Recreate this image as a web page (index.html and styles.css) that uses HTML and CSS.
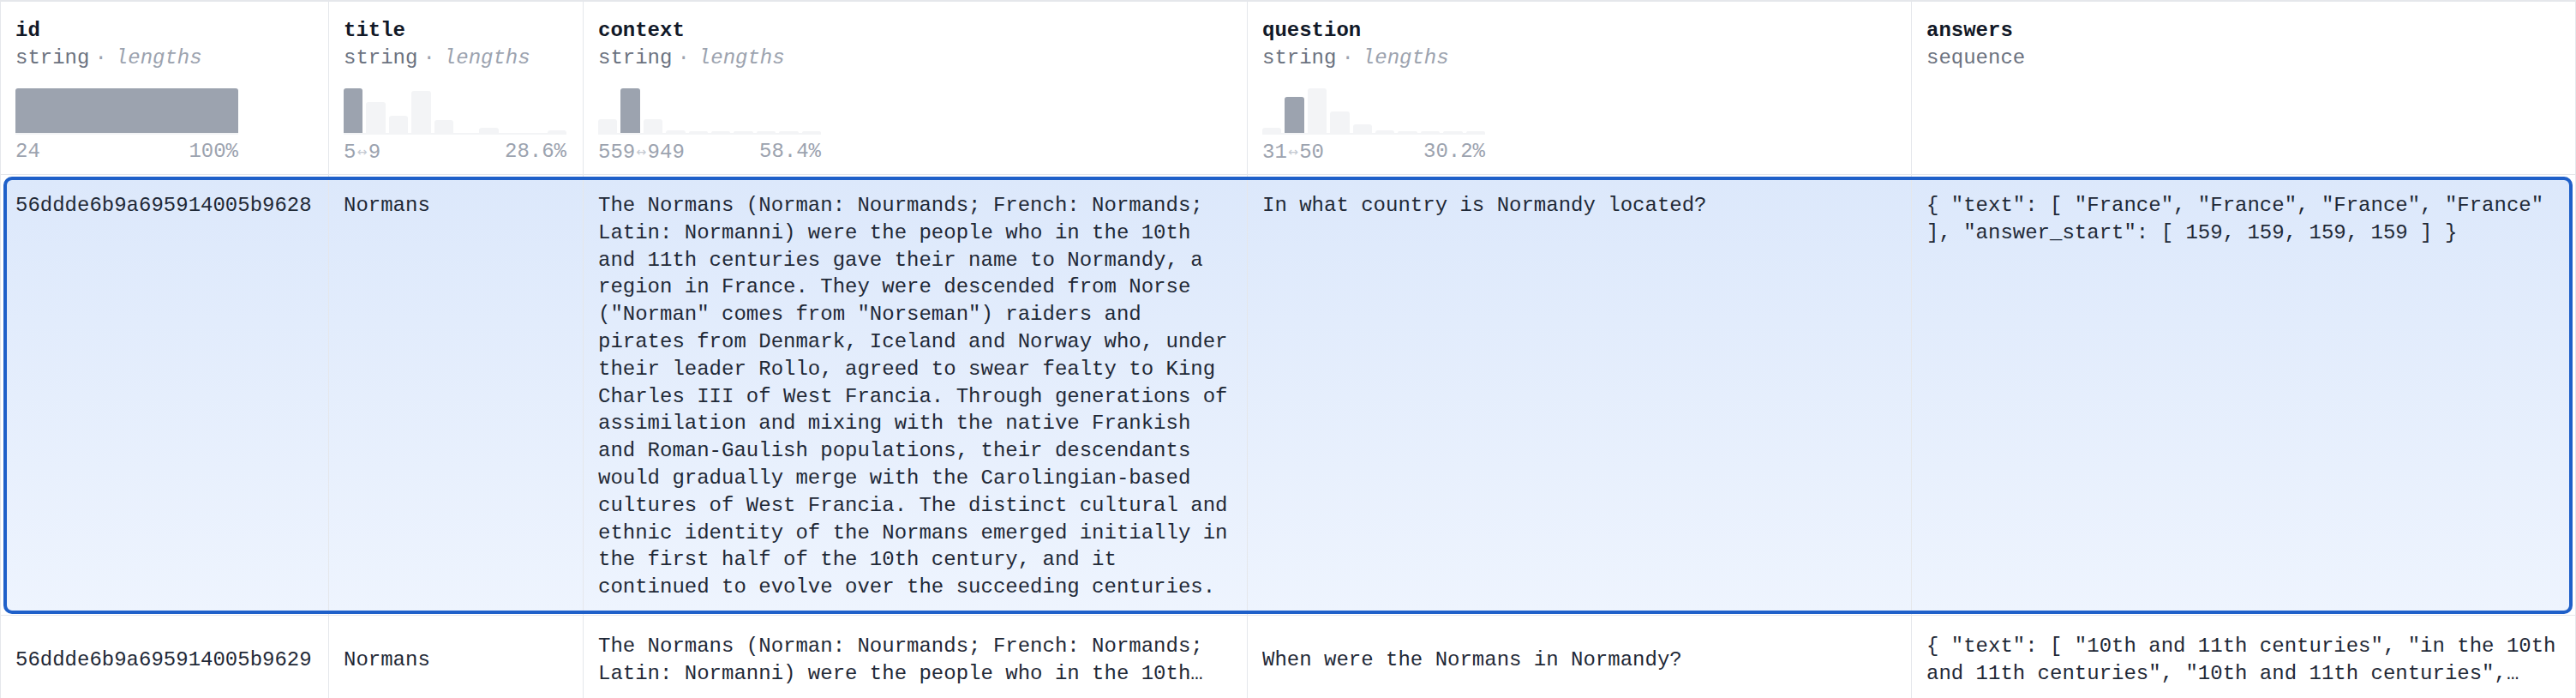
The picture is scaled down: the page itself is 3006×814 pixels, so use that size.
FILE: index.html
```html
<!DOCTYPE html>
<html lang="en">
<head>
<meta charset="utf-8">
<title>Dataset viewer</title>
<link rel="stylesheet" href="styles.css">
</head>
<body>
<div class="viewer">
  <div class="row head">
    <div class="cell">
      <div class="name">id</div>
      <div class="type">string<span class="sep">·</span><span class="kind">lengths</span></div>
      <div class="hist">
        <div class="bars"><div class="bar on" style="height:52px"></div></div>
        <div class="axis"></div>
        <div class="labels"><span>24</span><span>100%</span></div>
      </div>
    </div>
    <div class="cell">
      <div class="name">title</div>
      <div class="type">string<span class="sep">·</span><span class="kind">lengths</span></div>
      <div class="hist">
        <div class="bars">
          <div class="bar on" style="height:52px"></div>
          <div class="bar" style="height:36px"></div>
          <div class="bar" style="height:20px"></div>
          <div class="bar" style="height:49px"></div>
          <div class="bar" style="height:15px"></div>
          <div class="bar" style="height:0px"></div>
          <div class="bar" style="height:6px"></div>
          <div class="bar" style="height:0px"></div>
          <div class="bar" style="height:0px"></div>
          <div class="bar" style="height:3px"></div>
        </div>
        <div class="axis"></div>
        <div class="labels"><span>5<span class="arr">↔</span>9</span><span>28.6%</span></div>
      </div>
    </div>
    <div class="cell">
      <div class="name">context</div>
      <div class="type">string<span class="sep">·</span><span class="kind">lengths</span></div>
      <div class="hist">
        <div class="bars">
          <div class="bar" style="height:16px"></div>
          <div class="bar on" style="height:52px"></div>
          <div class="bar" style="height:16px"></div>
          <div class="bar" style="height:3px"></div>
          <div class="bar" style="height:2px"></div>
          <div class="bar" style="height:2px"></div>
          <div class="bar" style="height:2px"></div>
          <div class="bar" style="height:2px"></div>
          <div class="bar" style="height:2px"></div>
          <div class="bar" style="height:2px"></div>
        </div>
        <div class="axis"></div>
        <div class="labels"><span>559<span class="arr">↔</span>949</span><span>58.4%</span></div>
      </div>
    </div>
    <div class="cell">
      <div class="name">question</div>
      <div class="type">string<span class="sep">·</span><span class="kind">lengths</span></div>
      <div class="hist">
        <div class="bars">
          <div class="bar" style="height:6px"></div>
          <div class="bar on" style="height:42px"></div>
          <div class="bar" style="height:52px"></div>
          <div class="bar" style="height:25px"></div>
          <div class="bar" style="height:10px"></div>
          <div class="bar" style="height:3px"></div>
          <div class="bar" style="height:2px"></div>
          <div class="bar" style="height:2px"></div>
          <div class="bar" style="height:2px"></div>
          <div class="bar" style="height:2px"></div>
        </div>
        <div class="axis"></div>
        <div class="labels"><span>31<span class="arr">↔</span>50</span><span>30.2%</span></div>
      </div>
    </div>
    <div class="cell">
      <div class="name">answers</div>
      <div class="type">sequence</div>
    </div>
  </div>

  <div class="row selected">
    <div class="cell">56ddde6b9a695914005b9628</div>
    <div class="cell">Normans</div>
    <div class="cell">The Normans (Norman: Nourmands; French: Normands; Latin: Normanni) were the people who in the 10th and 11th centuries gave their name to Normandy, a region in France. They were descended from Norse ("Norman" comes from "Norseman") raiders and pirates from Denmark, Iceland and Norway who, under their leader Rollo, agreed to swear fealty to King Charles III of West Francia. Through generations of assimilation and mixing with the native Frankish and Roman-Gaulish populations, their descendants would gradually merge with the Carolingian-based cultures of West Francia. The distinct cultural and ethnic identity of the Normans emerged initially in the first half of the 10th century, and it continued to evolve over the succeeding centuries.</div>
    <div class="cell">In what country is Normandy located?</div>
    <div class="cell">{ "text": [ "France", "France", "France", "France" ], "answer_start": [ 159, 159, 159, 159 ] }</div>
  </div>

  <div class="row mid">
    <div class="cell"><div class="clamp">56ddde6b9a695914005b9629</div></div>
    <div class="cell"><div class="clamp">Normans</div></div>
    <div class="cell"><div class="clamp">The Normans (Norman: Nourmands; French: Normands; Latin: Normanni) were the people who in the 10th and 11th centuries gave their name to Normandy, a region in France. They were descended from Norse ("Norman" comes from "Norseman") raiders and pirates from Denmark, Iceland and Norway who, under their leader Rollo, agreed to swear fealty to King Charles III of West Francia.</div></div>
    <div class="cell"><div class="clamp">When were the Normans in Normandy?</div></div>
    <div class="cell"><div class="clamp">{ "text": [ "10th and 11th centuries", "in the 10th and 11th centuries", "10th and 11th centuries", "10th and 11th centuries" ], "answer_start": [ 94, 87, 94, 94 ] }</div></div>
  </div>
</div>
</body>
</html>
```
FILE: styles.css
```css
html, body {
  margin: 0;
  padding: 0;
  overflow: hidden;
  background: #ffffff;
}

body {
  font-family: "Liberation Mono", "DejaVu Sans Mono", monospace;
  font-size: 24px;
  color: #1f2937;
}

.viewer {
  width: 3006px;
  box-sizing: border-box;
  border-style: solid;
  border-color: #e5e7eb;
  border-width: 2px 1px 0 1px;
}

.row {
  display: grid;
  grid-template-columns: 382px 297px 775px 775px 1fr;
  border-bottom: 1px solid #e5e7eb;
}

.cell {
  box-sizing: border-box;
  min-width: 0;
  padding: 20px 17px 16px;
  line-height: 31.8px;
  overflow-wrap: break-word;
}

.cell + .cell {
  border-left: 1px solid #e5e7eb;
}

/* header */
.head .cell {
  padding: 18px 17px 9px;
  line-height: 32px;
}

.name {
  font-weight: 700;
  color: #111827;
}

.type {
  color: #6b7280;
}

.sep {
  color: #9ca3af;
  margin: 0 10px 0 6px;
}

.kind {
  font-style: italic;
  color: #9ca3af;
}

.hist {
  width: 260px;
  margin-top: 18px;
}

.bars {
  height: 53px;
  display: flex;
  align-items: flex-end;
  gap: 4px;
}

.bar {
  flex: 1;
  background: #f3f4f6;
  border-radius: 3px 3px 0 0;
}

.bar.on {
  background: #9ca3af;
}

.axis {
  height: 2px;
  background: #f3f4f6;
}

.labels {
  margin-top: 4px;
  display: flex;
  justify-content: space-between;
  color: #9ca3af;
}

.arr {
  display: inline-block;
  width: 14.4px;
  text-align: center;
  font-family: "DejaVu Sans", sans-serif;
  font-size: 14px;
  color: #c4c9d1;
  vertical-align: 2px;
}

/* selected (expanded) row */
.selected {
  position: relative;
  isolation: isolate;
}

.selected::before {
  content: "";
  position: absolute;
  inset: 2px 3px 1px 3px;
  border-radius: 10px;
  background: linear-gradient(to bottom, #dce8fb, #eef4fe);
  z-index: -1;
}

.selected::after {
  content: "";
  position: absolute;
  inset: 2px 3px 1px 3px;
  border: 4px solid #1f60c9;
  border-radius: 10px;
  pointer-events: none;
}

/* collapsed rows: centered, clamped */
.mid .cell {
  display: flex;
  flex-direction: column;
  justify-content: center;
  padding-bottom: 13px;
}

.clamp {
  display: -webkit-box;
  -webkit-box-orient: vertical;
  -webkit-line-clamp: 2;
  overflow: hidden;
}
```
